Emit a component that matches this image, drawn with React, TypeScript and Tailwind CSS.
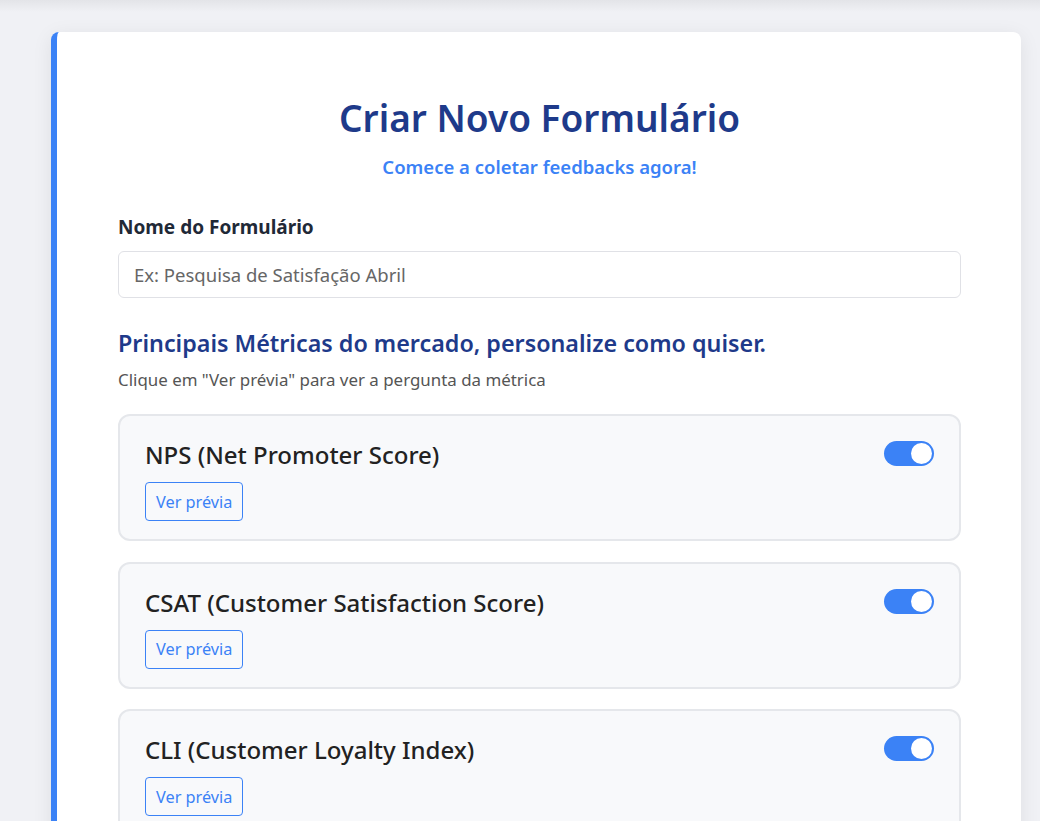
import React from "react";

const metrics = [
  "NPS (Net Promoter Score)",
  "CSAT (Customer Satisfaction Score)",
  "CLI (Customer Loyalty Index)",
];

function Toggle() {
  return (
    <div className="relative h-[25px] w-[50px] shrink-0 rounded-full bg-[#3b82f6]">
      <div className="absolute right-[2px] top-[2px] h-[21px] w-[21px] rounded-full bg-white" />
    </div>
  );
}

export default function App() {
  return (
    <div
      className="min-h-[821px] w-[1040px] overflow-hidden bg-[#f0f1f5]"
      style={{ fontFamily: '"Noto Sans", "Open Sans", sans-serif' }}
    >
      <div className="h-[12px] w-full bg-gradient-to-b from-[#e3e4e8] to-[#f0f1f5]" />
      <div className="ml-[51px] mt-[20px] w-[970px] rounded-[8px] border-l-[6px] border-[#3b82f6] bg-white pl-[61px] pr-[60px] pt-[62px] pb-[40px] shadow-[0_4px_20px_rgba(0,0,0,0.08)]">
        <h1 className="text-center text-[37px] font-semibold leading-[48px] text-[#1e3a8a]">
          Criar Novo Formulário
        </h1>
        <p className="mt-[13px] text-center text-[18.5px] font-semibold leading-[24px] text-[#3b82f6]">
          Comece a coletar feedbacks agora!
        </p>

        <label className="mt-[36px] block text-[19px] font-bold leading-[24px] text-[#1f2937]">
          Nome do Formulário
        </label>
        <input
          className="mt-[12px] block h-[47px] w-full rounded-[6px] border border-[#e0e1e6] bg-white px-[15px] text-[18.5px] text-[#333] placeholder:text-[#666] outline-none"
          placeholder="Ex: Pesquisa de Satisfação Abril"
        />

        <h2 className="mt-[28px] text-[23.3px] font-semibold leading-[34px] text-[#1e3a8a]">
          Principais Métricas do mercado, personalize como quiser.
        </h2>
        <p className="mt-[9px] text-[16.9px] leading-[22px] text-[#555]">
          Clique em "Ver prévia" para ver a pergunta da métrica
        </p>

        <div className="mt-[23px] flex flex-col gap-[20.5px]">
          {metrics.map((m) => (
            <div
              key={m}
              className="h-[127px] rounded-[12px] border-2 border-[#e5e7eb] bg-[#f8f9fb] px-[25px] pt-[22px]"
            >
              <div className="flex items-start justify-between">
                <h3 className="text-[24px] font-medium leading-[34px] text-[#222]">{m}</h3>
                <div className="mt-[3px]">
                  <Toggle />
                </div>
              </div>
              <button className="mt-[10px] h-[39px] rounded-[4px] border border-[#3b82f6] bg-transparent px-[10px] text-[16.3px] leading-[20px] text-[#3b82f6]">
                Ver prévia
              </button>
            </div>
          ))}
        </div>
      </div>
    </div>
  );
}
